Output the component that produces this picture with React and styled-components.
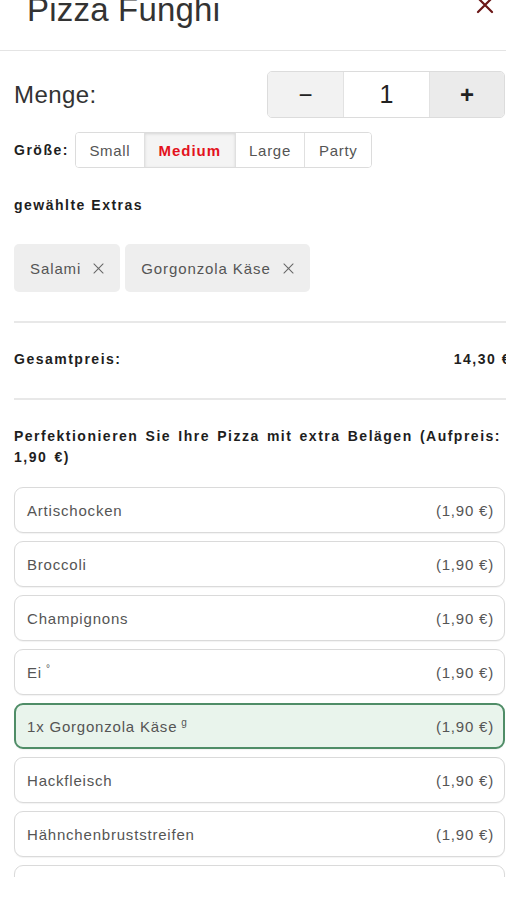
import React from "react";
import styled, { createGlobalStyle } from "styled-components";

const Global = createGlobalStyle`
  html, body { margin: 0; padding: 0; background: #fff; }
  body { font-family: "Liberation Sans", Arial, sans-serif; overflow: hidden; }
  * { box-sizing: border-box; }
`;

const Modal = styled.div`
  width: 506px;
  height: 900px;
  display: flex;
  flex-direction: column;
  overflow: hidden;
  background: #fff;
`;

const Header = styled.header`
  flex: none;
  height: 51px;
  display: flex;
  justify-content: space-between;
  align-items: flex-start;
  padding: 0 11px 0 27px;
  border-bottom: 1px solid #e4e4e4;
`;

const Title = styled.h1`
  margin: -7px 0 0;
  font-size: 33px;
  line-height: 33px;
  font-weight: 400;
  letter-spacing: 0.2px;
  color: #333;
`;

const Close = styled.button`
  margin-top: -5px;
  width: 20px;
  height: 20px;
  padding: 0;
  border: 0;
  background: none;
  display: flex;
`;

const Body = styled.div`
  flex: 1;
  min-height: 0;
  overflow: hidden;
  padding: 20px 1px 0 14px;
`;

const MengeRow = styled.div`
  display: flex;
  justify-content: space-between;
  align-items: center;
`;

const MengeLabel = styled.span`
  font-size: 24px;
  letter-spacing: 0.4px;
  color: #333;
`;

const Stepper = styled.div`
  display: flex;
  height: 47px;
  border: 1px solid #dcdcdc;
  border-radius: 5px;
  overflow: hidden;
`;

const StepBtn = styled.button`
  width: ${(p) => p.$w}px;
  border: 0;
  padding: 0;
  background: ${(p) => p.$bg};
  font-family: inherit;
  font-size: 24px;
  font-weight: ${(p) => (p.$bold ? 700 : 400)};
  color: #222;
  display: flex;
  align-items: center;
  justify-content: center;
`;

const StepValue = styled.div`
  width: 87px;
  background: #fff;
  border-left: 1px solid #e2e2e2;
  border-right: 1px solid #e2e2e2;
  display: flex;
  align-items: center;
  justify-content: center;
  font-size: 25px;
  color: #222;
`;

const SizeRow = styled.div`
  margin-top: 14px;
  display: flex;
  align-items: center;
  gap: 6px;
`;

const BoldLabel = styled.div`
  font-size: 14px;
  font-weight: 700;
  letter-spacing: 1.5px;
  line-height: 20px;
  color: #1e1e1e;
`;

const Segments = styled.div`
  display: flex;
  height: 36px;
  border: 1px solid #dcdcdc;
  border-radius: 4px;
  overflow: hidden;
`;

const Segment = styled.button`
  padding: 0 13.5px;
  border: 0;
  border-left: ${(p) => (p.$first ? "0" : "1px solid #e0e0e0")};
  background: ${(p) => (p.$active ? "#f4f4f4" : "#fff")};
  box-shadow: ${(p) => (p.$active ? "inset 0 1px 3px rgba(0,0,0,0.12)" : "none")};
  font-family: inherit;
  font-size: 15px;
  letter-spacing: ${(p) => (p.$active ? "1px" : "0.7px")};
  font-weight: ${(p) => (p.$active ? 700 : 400)};
  color: ${(p) => (p.$active ? "#e3121d" : "#555")};
`;

const Section = styled.div`
  margin-top: ${(p) => p.$mt}px;
`;

const Chips = styled.div`
  margin-top: 29px;
  display: flex;
  gap: 5px;
`;

const Chip = styled.div`
  height: 48px;
  display: flex;
  align-items: center;
  gap: 11px;
  padding: 0 15px 0 16px;
  background: #eeeeee;
  border-radius: 5px;
  font-size: 15px;
  letter-spacing: 0.9px;
  color: #555;
`;

const ChipX = styled.span`
  display: flex;
  color: #666;
`;

const Divider = styled.hr`
  margin: ${(p) => p.$mt}px -1px 0 0;
  border: 0;
  height: 2px;
  background: #e8e8e8;
`;

const TotalRow = styled.div`
  margin-top: 26px;
  display: flex;
  justify-content: space-between;
  align-items: center;
`;

const TotalPrice = styled(BoldLabel)`
  margin-right: -6px;
`;

const Heading = styled(BoldLabel)`
  margin-top: 26px;
  line-height: 21px;
  word-spacing: 1.8px;
`;

const Options = styled.div`
  margin-top: 19px;
  display: flex;
  flex-direction: column;
  gap: 8px;
`;

const Option = styled.div`
  flex: none;
  height: 46px;
  display: flex;
  justify-content: space-between;
  align-items: center;
  padding: 0 ${(p) => (p.$selected ? 9 : 10)}px 0 ${(p) => (p.$selected ? 11 : 12)}px;
  border: ${(p) => (p.$selected ? "2px solid #4f8d67" : "1px solid #dadada")};
  border-radius: 9px;
  background: ${(p) => (p.$selected ? "#e9f4ec" : "#fff")};
  box-shadow: 0 1px 1px rgba(0, 0, 0, 0.05);
  font-size: 15px;
  letter-spacing: 0.8px;
  color: #555;
`;

const Sup = styled.sup`
  font-size: 10px;
  margin-left: 4px;
  letter-spacing: 0;
`;

const Footer = styled.div`
  flex: none;
  height: 23px;
  background: #fff;
`;

const XIcon = ({ size, color, width }) => (
  <svg width={size} height={size} viewBox="0 0 20 20">
    <path d="M3 3 L17 17 M17 3 L3 17" stroke={color} strokeWidth={width} strokeLinecap="round" fill="none" />
  </svg>
);

const sizes = ["Small", "Medium", "Large", "Party"];
const extras = ["Salami", "Gorgonzola Käse"];
const options = [
  { name: "Artischocken" },
  { name: "Broccoli" },
  { name: "Champignons" },
  { name: "Ei", sup: "°" },
  { name: "1x Gorgonzola Käse", sup: "g", selected: true },
  { name: "Hackfleisch" },
  { name: "Hähnchenbruststreifen" },
  { name: "Jalapeños" },
  { name: "Knoblauch" },
];

export default function App() {
  return (
    <>
      <Global />
      <Modal>
        <Header>
          <Title>Pizza Funghi</Title>
          <Close aria-label="Schließen">
            <XIcon size={20} color="#6b1717" width={2.2} />
          </Close>
        </Header>
        <Body>
          <MengeRow>
            <MengeLabel>Menge:</MengeLabel>
            <Stepper>
              <StepBtn $w={75} $bg="#f2f2f2">−</StepBtn>
              <StepValue>1</StepValue>
              <StepBtn $w={74} $bg="#ebebeb" $bold>+</StepBtn>
            </Stepper>
          </MengeRow>
          <SizeRow>
            <BoldLabel>Größe:</BoldLabel>
            <Segments>
              {sizes.map((s, i) => (
                <Segment key={s} $first={i === 0} $active={s === "Medium"}>
                  {s}
                </Segment>
              ))}
            </Segments>
          </SizeRow>
          <Section $mt={27}>
            <BoldLabel>gewählte Extras</BoldLabel>
          </Section>
          <Chips>
            {extras.map((e) => (
              <Chip key={e}>
                {e}
                <ChipX>
                  <XIcon size={13} color="#666" width={1.6} />
                </ChipX>
              </Chip>
            ))}
          </Chips>
          <Divider $mt={29} />
          <TotalRow>
            <BoldLabel>Gesamtpreis:</BoldLabel>
            <TotalPrice>14,30 €</TotalPrice>
          </TotalRow>
          <Divider $mt={29} />
          <Heading>Perfektionieren Sie Ihre Pizza mit extra Belägen (Aufpreis: 1,90 €)</Heading>
          <Options>
            {options.map((o) => (
              <Option key={o.name} $selected={o.selected}>
                <span>
                  {o.name}
                  {o.sup && <Sup>{o.sup}</Sup>}
                </span>
                <span>(1,90 €)</span>
              </Option>
            ))}
          </Options>
        </Body>
        <Footer />
      </Modal>
    </>
  );
}
